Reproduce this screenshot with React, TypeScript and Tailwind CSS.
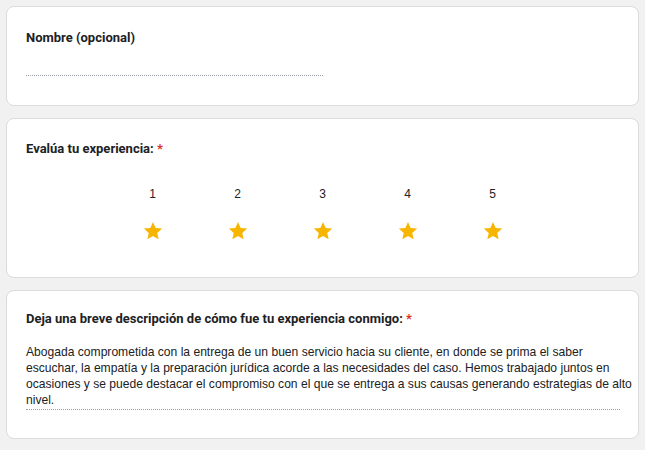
import React from "react";

const font = { fontFamily: "Roboto, 'Liberation Sans', Arial, sans-serif" };
const bodyFont = { fontFamily: "'Liberation Sans', Arial, sans-serif" };

function Star() {
  return (
    <svg width="22" height="22" viewBox="0 0 24 24" aria-hidden="true">
      <path
        fill="#f7b500"
        d="M12 2.2l2.9 6.6 7.1.6-5.4 4.7 1.6 7-6.2-3.7-6.2 3.7 1.6-7L2 9.4l7.1-.6z"
      />
    </svg>
  );
}

function Card({ children, className = "" }: { children: React.ReactNode; className?: string }) {
  return (
    <section className={`rounded-lg border border-[#dadce0] bg-white pl-[19px] pr-[16px] ${className}`}>
      {children}
    </section>
  );
}

const answer = [
  "Abogada comprometida con la entrega de un buen servicio hacia su cliente, en donde se prima el saber",
  "escuchar, la empatía y la preparación jurídica acorde a las necesidades del caso. Hemos trabajado juntos en",
  "ocasiones y se puede destacar el compromiso con el que se entrega a sus causas generando estrategias de alto",
  "nivel.",
];

export default function App() {
  const ratings = [1, 2, 3, 4, 5];
  return (
    <div className="h-screen overflow-hidden bg-[#f1f1f1] px-[6px] pt-[6px] text-[#202124]" style={font}>
      <div className="flex flex-col gap-[12px]">
        <Card className="h-[100px] pt-[21px]">
          <h2 className="text-[13px] font-bold leading-5">Nombre (opcional)</h2>
          <div className="mt-[27px] w-[297px] border-b border-dotted border-[#9aa0a6]" />
        </Card>

        <Card className="h-[160px] pt-[20px]">
          <h2 className="text-[13px] font-bold leading-5">
            Evalúa tu experiencia: <span className="text-[#d93025]">*</span>
          </h2>
          <div className="ml-[84px] mt-[27px] flex" style={bodyFont}>
            {ratings.map((n) => (
              <div key={n} className="flex w-[85px] flex-col items-center">
                <span className="text-[12px] leading-4">{n}</span>
                <div className="mt-[18px]">
                  <Star />
                </div>
              </div>
            ))}
          </div>
        </Card>

        <Card className="h-[149px] pt-[18px]">
          <h2 className="text-[13px] font-bold leading-5">
            Deja una breve descripción de cómo fue tu experiencia conmigo:{" "}
            <span className="text-[#d93025]">*</span>
          </h2>
          <div
            className="mt-[15px] w-[594px] border-b border-dotted border-[#9aa0a6] pb-[1px] text-[12.1px] leading-4"
            style={bodyFont}
          >
            {answer.map((line) => (
              <p key={line} className="whitespace-nowrap">
                {line}
              </p>
            ))}
          </div>
        </Card>

        <Card className="h-[40px]">
          <span />
        </Card>
      </div>
    </div>
  );
}
